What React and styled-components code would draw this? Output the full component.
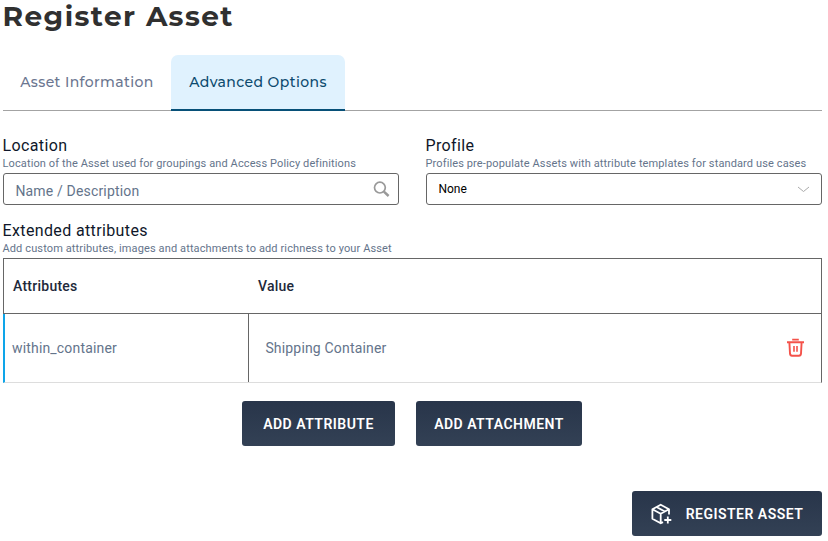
import React from "react";
import styled, { createGlobalStyle } from "styled-components";

const GlobalStyle = createGlobalStyle`
  * { box-sizing: border-box; }
  body { margin: 0; background: #fff; font-family: Roboto, sans-serif; }
`;

const Page = styled.main`
  width: 828px;
  height: 541px;
  padding: 0 6px 5px 3px;
  display: flex;
  flex-direction: column;
  overflow: hidden;
`;

const Title = styled.h1`
  margin: 0 0 0 -0.5px;
  height: 55px;
  font: 700 28px/32px Montserrat, Inter, sans-serif;
  letter-spacing: 1.43px;
  color: #303030;
  white-space: nowrap;
`;

const Tabs = styled.nav`
  display: flex;
  height: 56px;
  flex: none;
  border-bottom: 1px solid #a3a3a3;
`;

const Tab = styled.button`
  width: ${(p) => p.$width}px;
  height: 56px;
  padding: 0 0 1px;
  border: 0;
  border-bottom: 2px solid ${(p) => (p.$active ? "#075078" : "transparent")};
  border-radius: 7px 7px 0 0;
  background: ${(p) => (p.$active ? "#e0f2fe" : "transparent")};
  color: ${(p) => (p.$active ? "#0c4a6e" : "#6b7690")};
  font: 500 14px/20px Montserrat, Inter, sans-serif;
  letter-spacing: 0.39px;
  white-space: nowrap;
`;

const Fields = styled.section`
  display: grid;
  grid-template-columns: 396px 396px;
  gap: 27px;
  margin-top: 25px;
`;

const Label = styled.h2`
  margin: 0 0 0 -0.5px;
  font: 400 16px/20px Roboto, sans-serif;
  letter-spacing: 0.37px;
  color: #0f172a;
`;

const Hint = styled.p`
  margin: 0 0 0 -0.5px;
  padding-top: 1px;
  font-size: 11px;
  line-height: 14px;
  letter-spacing: 0.12px;
  color: #64748b;
  white-space: nowrap;
`;

const Control = styled.div`
  display: flex;
  align-items: center;
  justify-content: space-between;
  height: 32px;
  margin-top: 2px;
  padding: 0 ${(p) => p.$inset}px 0 11.4px;
  border: 1px solid #666;
  border-radius: 3px;
`;

const SearchInput = styled.input`
  flex: 1;
  min-width: 0;
  padding: 3px 0 0;
  border: 0;
  outline: 0;
  background: transparent;
  font: 400 14px/18px Roboto, sans-serif;
  letter-spacing: 0.17px;
  &::placeholder { color: #64748b; opacity: 1; }
`;

const Selected = styled.span`
  font-size: 12px;
  line-height: 16px;
  padding-bottom: 1px;
  color: #000;
`;

const Extended = styled.section`
  margin-top: 16px;
`;

const Table = styled.div`
  margin-top: 2px;
  height: 125px;
`;

const HeadRow = styled.div`
  display: grid;
  grid-template-columns: 245px 1fr;
  align-items: center;
  height: 56px;
  padding-left: 9px;
  border: 1px solid #666;
  font-size: 14px;
  font-weight: 480;
  letter-spacing: 0.25px;
  color: #1e293b;
`;

const BodyRow = styled.div`
  display: grid;
  grid-template-columns: 244px 1fr;
  height: 69px;
  border-right: 1px solid #666;
  border-bottom: 1px solid #ddd;
  border-left: 2px solid #0ea5e9;
  font-size: 14px;
  letter-spacing: 0.17px;
  color: #64748b;
`;

const Cell = styled.div`
  display: flex;
  align-items: center;
  justify-content: space-between;
  padding: 0 16px 0 ${(p) => (p.$name ? 7 : 16.4)}px;
  border-right: ${(p) => (p.$name ? "1px solid #666" : "0")};
`;

const Actions = styled.div`
  display: flex;
  gap: 21px;
  margin: 18px 0 0 239px;
`;

const Button = styled.button`
  display: flex;
  align-items: center;
  justify-content: center;
  gap: 14px;
  width: ${(p) => p.$width}px;
  height: 45px;
  padding: 1px 0 0;
  border: 0;
  border-radius: 3px;
  background: linear-gradient(#28354a, #334155);
  color: #fff;
  font: 650 14px/20px Roboto, sans-serif;
  letter-spacing: 0.48px;
  white-space: nowrap;
`;

const Footer = styled.footer`
  display: flex;
  justify-content: flex-end;
  margin-top: 45px;
`;

const SearchIcon = () => (
  <svg width="18" height="18" viewBox="0 0 18 18" fill="none" stroke="#999">
    <circle cx="6.9" cy="7.6" r="5.4" strokeWidth="1.7" />
    <path d="M10.9 11.6 15.6 16" strokeWidth="2.5" />
  </svg>
);

const ChevronIcon = () => (
  <svg width="13" height="8" viewBox="0 0 13 8" fill="none" stroke="#aaa">
    <path d="M1 2 6.5 6.5 12 2" />
  </svg>
);

const TrashIcon = () => (
  <svg width="19" height="20" viewBox="0 0 19 20" fill="none" stroke="#f4524a" strokeWidth="1.9">
    <path d="M6.2 1.6h6.6M1 4.3h17M3.4 4.5l.6 11.2q.2 2 2 2h7q1.8 0 2-2l.6-11.2" />
    <path d="M8 8v5.8M11 8v5.8" strokeWidth="1.6" />
  </svg>
);

const BoxPlusIcon = () => (
  <svg width="21" height="22" viewBox="0 0 21 22" fill="none" stroke="#fff" strokeWidth="1.8" strokeLinejoin="round">
    <path d="M18 11.5V6.2L9.7 1.7 1.4 6.2v9.6l8.3 4.5 2.3-1.2M1.4 6.2l8.3 4.5L18 6.2M9.7 10.7v9.6M5.5 4l8.3 4.5" />
    <path d="M16.8 13.5v7M13.3 17h7" />
  </svg>
);

export default function App() {
  return (
    <>
      <GlobalStyle />
      <Page>
        <Title>Register Asset</Title>
        <Tabs>
          <Tab $width={168}>Asset Information</Tab>
          <Tab $width={174} $active>Advanced Options</Tab>
        </Tabs>
        <Fields>
          <div>
            <Label>Location</Label>
            <Hint>Location of the Asset used for groupings and Access Policy definitions</Hint>
            <Control $inset={7}>
              <SearchInput placeholder="Name / Description" />
              <SearchIcon />
            </Control>
          </div>
          <div>
            <Label>Profile</Label>
            <Hint>Profiles pre-populate Assets with attribute templates for standard use cases</Hint>
            <Control $inset={11}>
              <Selected>None</Selected>
              <ChevronIcon />
            </Control>
          </div>
        </Fields>
        <Extended>
          <Label>Extended attributes</Label>
          <Hint>Add custom attributes, images and attachments to add richness to your Asset</Hint>
          <Table>
            <HeadRow>
              <span>Attributes</span>
              <span>Value</span>
            </HeadRow>
            <BodyRow>
              <Cell $name>within_container</Cell>
              <Cell>
                Shipping Container
                <TrashIcon />
              </Cell>
            </BodyRow>
          </Table>
        </Extended>
        <Actions>
          <Button $width={153}>ADD ATTRIBUTE</Button>
          <Button $width={166}>ADD ATTACHMENT</Button>
        </Actions>
        <Footer>
          <Button $width={190}>
            <BoxPlusIcon />
            REGISTER ASSET
          </Button>
        </Footer>
      </Page>
    </>
  );
}
